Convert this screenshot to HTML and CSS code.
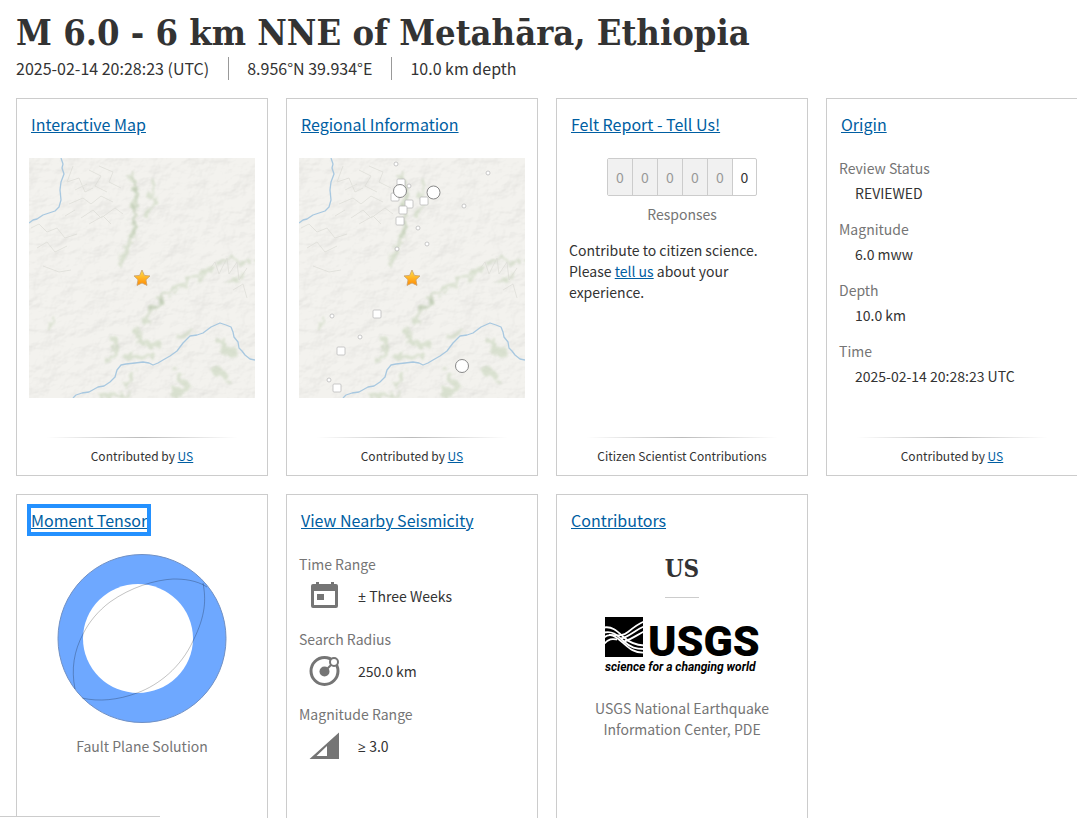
FILE: index.html
```html
<!DOCTYPE html>
<html lang="en-US">
<head>
	<meta charset="utf-8">
	<meta name="viewport" content="width=device-width, initial-scale=1">
	<title>M 6.0 - 6 km NNE of Metahāra, Ethiopia</title>
	<link rel="stylesheet" href="styles.css">
</head>
<body>

<!-- shared base map and star, used by both map cards -->
<svg class="defs" width="0" height="0" aria-hidden="true">
	<defs>
		<filter id="relief" x="0" y="0" width="100%" height="100%" color-interpolation-filters="sRGB">
			<feTurbulence type="fractalNoise" baseFrequency="0.04 0.055" numOctaves="5" seed="11"/>
			<feDiffuseLighting surfaceScale="3" diffuseConstant="1.2" lighting-color="#fffffb">
				<feDistantLight azimuth="225" elevation="52"/>
			</feDiffuseLighting>
		</filter>
		<filter id="soft" x="-10%" y="-10%" width="120%" height="120%">
			<feTurbulence type="fractalNoise" baseFrequency="0.12" numOctaves="3" seed="4" result="noise"/>
			<feDisplacementMap in="SourceGraphic" in2="noise" scale="16" xChannelSelector="R" yChannelSelector="G"/>
			<feGaussianBlur stdDeviation="1.2"/>
		</filter>
		<linearGradient id="gold" x1="0" y1="0" x2="0" y2="1">
			<stop offset="0" stop-color="#ffe14d"/>
			<stop offset="1" stop-color="#ff8a00"/>
		</linearGradient>
		<symbol id="basemap" viewBox="0 0 226 240">
			<rect width="226" height="240" fill="#f2f1ed"/>
			<rect width="226" height="240" filter="url(#relief)" opacity="0.1"/>
			<g fill="none" stroke="#c6d4b9" stroke-linecap="round" opacity="0.55" filter="url(#soft)">
				<path stroke-width="5" d="M103 18L107 40L105 60L104 80L96 92L91 108"/>
				<path stroke-width="4" d="M123 22L125 42L116 60"/>
				<path stroke-width="4" d="M186 108L165 120L150 129L137 137L122 150L116 165"/>
				<path stroke-width="5" d="M106 172L112 184L130 188M84 180L86 192L80 202M96 200L125 197"/>
				<path stroke-width="4" d="M103 216L98 228M20 170L26 160M150 178L164 174"/>
				<path stroke-width="8" d="M150 216L158 228L148 236M190 185L206 195M188 212L198 222"/>
				<path stroke-width="4" d="M190 105L204 102L222 104M200 124L216 120M72 239L100 236"/>
			</g>
			<path fill="none" stroke="#8fa381" stroke-width="2" opacity="0.3" filter="url(#soft)" d="M105 20L108 42L104 80M120 152L140 135"/>
			<g fill="none" stroke="#dcdcd6" stroke-width="1" opacity="0.7">
				<path d="M44 8L38 24L50 20L56 34L64 30M60 12L72 18L66 28L78 34M40 46L54 40L62 46L72 38L84 44M52 60L64 52L72 60L86 50L94 56"/>
				<path d="M46 32L58 26M70 8L84 14L80 24L92 30M60 66L74 58L82 66M36 58L46 52"/>
				<path d="M2 70L10 66L18 74L28 70L36 80L48 76M8 90L18 84L26 94L38 88M14 108L30 114L42 112"/>
				<path d="M180 112L186 104L190 116L198 100L200 116L208 104L210 122L218 110M204 132L214 126L218 140"/>
			</g>
			<g fill="none" stroke="#a8c8e0" stroke-width="1.3" stroke-linejoin="round">
				<path d="M32 0L34 6L33 10L35 16L32 24L31 32L32 42L30 49L26 53L20 55L14 57L8 61L4 62L0 65"/>
				<path d="M44 240L47 237L53 235L60 234L69 229L75 228L81 224L86 219L88 212L92 207L97 206L106 205L114 204L120 205L124 207L129 205L134 202L141 198L148 193L154 185L161 178L168 177L174 175L182 169L191 165L197 167L202 169L204 174L205 179L209 184L210 190L213 193L216 197L221 201L226 202"/>
			</g>
		</symbol>
		<symbol id="star" viewBox="0 0 18 18">
			<path fill="url(#gold)" stroke="#c9a06c" stroke-width="0.8" stroke-linejoin="round" d="M9 1L11.4 6.4L17 6.9L13 10.8L14 16.4L9 14L4 16.4L5 10.8L1 6.9L6.6 6.4Z"/>
		</symbol>
	</defs>
</svg>

<main class="event">
	<header class="event-header">
		<h1>M 6.0 - 6 km NNE of Metahāra, Ethiopia</h1>
		<ul class="details">
			<li>2025-02-14 20:28:23 (UTC)</li>
			<li>8.956°N 39.934°E</li>
			<li>10.0 km depth</li>
		</ul>
	</header>

	<div class="cards">
		<section class="card">
			<h2><a href="#map">Interactive Map</a></h2>
			<svg class="map" viewBox="0 0 226 240" preserveAspectRatio="xMidYMid slice" role="img" aria-label="Map of the epicenter">
				<use href="#basemap" width="226" height="240"/>
				<use href="#star" x="104" y="111" width="18" height="18"/>
			</svg>
			<footer>Contributed by <a href="#us">US</a></footer>
		</section>

		<section class="card">
			<h2><a href="#region-info">Regional Information</a></h2>
			<svg class="map" viewBox="0 0 226 240" preserveAspectRatio="xMidYMid slice" role="img" aria-label="Map of regional seismicity">
				<use href="#basemap" width="226" height="240"/>
				<g fill="#fff" stroke="#bbb" stroke-width="0.8">
					<circle cx="97" cy="6" r="2"/>
					<circle cx="110" cy="28" r="2"/>
					<circle cx="189" cy="15" r="2"/>
					<circle cx="165" cy="48" r="2"/>
					<circle cx="119" cy="70" r="2"/>
					<circle cx="128" cy="86" r="2"/>
					<circle cx="98" cy="91" r="2"/>
					<circle cx="33" cy="158" r="2"/>
					<circle cx="61" cy="179" r="2"/>
					<circle cx="30" cy="222" r="2"/>
					<rect x="98" y="21" width="8" height="8" rx="1"/>
					<rect x="92" y="35" width="8" height="8" rx="1"/>
					<rect x="106" y="42" width="8" height="8" rx="1"/>
					<rect x="121" y="39" width="8" height="8" rx="1"/>
					<rect x="100" y="48" width="8" height="8" rx="1"/>
					<rect x="97" y="59" width="8" height="8" rx="1"/>
					<rect x="74" y="152" width="8" height="8" rx="1"/>
					<rect x="38" y="189" width="8" height="8" rx="1"/>
					<rect x="34" y="226" width="8" height="8" rx="1"/>
				</g>
				<g fill="#fff" stroke="#888" stroke-width="1">
					<circle cx="101" cy="33" r="6.5"/>
					<circle cx="134.5" cy="34.5" r="6.5"/>
					<circle cx="163" cy="208" r="6.5"/>
				</g>
				<use href="#star" x="104" y="111" width="18" height="18"/>
			</svg>
			<footer>Contributed by <a href="#us">US</a></footer>
		</section>

		<section class="card">
			<h2><a href="#tellus">Felt Report - Tell Us!</a></h2>
			<div class="responses">
				<span class="digit empty">0</span>
				<span class="digit empty">0</span>
				<span class="digit empty">0</span>
				<span class="digit empty">0</span>
				<span class="digit empty">0</span>
				<span class="digit">0</span>
			</div>
			<p class="caption responses-label">Responses</p>
			<p class="contribute">Contribute to citizen science. Please <a href="#tellus">tell us</a> about your experience.</p>
			<footer>Citizen Scientist Contributions</footer>
		</section>

		<section class="card">
			<h2><a href="#origin">Origin</a></h2>
			<dl class="origin">
				<dt>Review Status</dt>
				<dd>REVIEWED</dd>
				<dt>Magnitude</dt>
				<dd>6.0 mww</dd>
				<dt>Depth</dt>
				<dd>10.0 km</dd>
				<dt>Time</dt>
				<dd>2025-02-14 20:28:23 UTC</dd>
			</dl>
			<footer>Contributed by <a href="#us">US</a></footer>
		</section>

		<section class="card">
			<h2><a class="focused" href="#moment-tensor">Moment Tensor</a></h2>
			<svg class="beachball" viewBox="0 0 170 170" width="170" height="170" role="img" aria-label="Focal mechanism">
				<circle cx="85" cy="84.5" r="84" fill="#6ea8ff" stroke="#7090c4"/>
				<ellipse cx="81" cy="84.5" rx="55" ry="54.5" fill="#fff"/>
				<g fill="none" stroke="#000" stroke-opacity="0.24">
					<path d="M146 29C149 45 149 61 136 87C124 113 102 131 80 139C61 146 42 148 25 144"/>
					<path d="M150 33C139 26 127 25 116 25C98 26 74 33 53 48C41 57 32 68 26 80C17 97 14 115 18 135"/>
				</g>
			</svg>
			<p class="caption">Fault Plane Solution</p>
		</section>

		<section class="card">
			<h2><a href="#nearby">View Nearby Seismicity</a></h2>
			<dl class="nearby">
				<dt>Time Range</dt>
				<dd>
					<svg class="icon" viewBox="0 0 32 32" width="32" height="32" aria-hidden="true">
						<path fill-rule="evenodd" d="M5 4H8V2H11V4H23V2H26V4H28Q30 4 30 6V26Q30 28 28 28H5Q3 28 3 26V6Q3 4 5 4ZM6 11V25H27V11ZM9 14H16V20H9Z"/>
					</svg>
					<span><span class="symbol">±</span> Three Weeks</span>
				</dd>
				<dt>Search Radius</dt>
				<dd>
					<svg class="icon" viewBox="0 0 32 32" width="32" height="32" aria-hidden="true">
						<circle cx="16.5" cy="16" r="13.5" fill="none" stroke="#757575" stroke-width="3"/>
						<circle cx="16.5" cy="16.5" r="5"/>
						<path stroke="#757575" stroke-width="2" d="M17 16L24 9"/>
						<circle cx="26" cy="7" r="4" fill="#fff" stroke="#757575" stroke-width="2"/>
					</svg>
					<span>250.0 km</span>
				</dd>
				<dt>Magnitude Range</dt>
				<dd>
					<svg class="icon" viewBox="0 0 32 32" width="32" height="32" aria-hidden="true">
						<path fill-rule="evenodd" d="M1.5 29L31 2.5V29ZM8.5 26H19V16Z"/>
					</svg>
					<span><span class="symbol">≥</span> 3.0</span>
				</dd>
			</dl>
		</section>

		<section class="card">
			<h2><a href="#contributors">Contributors</a></h2>
			<div class="contributor">
				<h3>US</h3>
				<svg class="logo" viewBox="0 0 156 58" width="156" height="58" role="img" aria-label="USGS science for a changing world">
					<rect x="1" y="0" width="38" height="40"/>
					<g fill="none" stroke="#fff" stroke-width="1.8">
						<path d="M0 10.5C9 9 14 15 20 20.5S32 28 40 28.5"/>
						<path d="M0 15.5C9 13.5 13 18 20 24.5S32 32 40 32"/>
						<path d="M0 20.5C7 15 12 20 18 25S29 36 40 35.5"/>
						<path d="M5 18C12 18 18 20 24 15S34 7 40 4.5"/>
						<path d="M17 21.5C25 20 31 13 40 9.5"/>
						<path d="M0 27C5 21 9 22 13 22.5M20 24.5C28 22 33 18 40 14.5"/>
					</g>
					<text class="logo-name" x="44" y="39">USGS</text>
					<text class="logo-tag" x="1" y="54">science for a changing world</text>
				</svg>
				<p class="caption">USGS National Earthquake Information Center, PDE</p>
			</div>
		</section>
	</div>
</main>

<div class="status-bar"></div>

</body>
</html>
```

FILE: styles.css
```css
html, body {
	height: 100%;
}
body {
	margin: 0;
	background: #fff;
	color: #333;
	font-family: "Noto Sans CJK SC", "Noto Sans", sans-serif;
	font-size: 14px;
	line-height: 22px;
}
h1, h2, h3, p, ul, dl, dd {
	margin: 0;
	padding: 0;
}
a {
	color: #005ea2;
}
.defs {
	position: absolute;
}

/* scrolling page */
.event {
	box-sizing: border-box;
	height: 100%;
	padding: 8px 0 18px 16px;
	overflow-x: hidden;
	overflow-y: auto;
	scrollbar-width: none;
}
.event-header h1 {
	font-family: "DejaVu Serif Condensed", "DejaVu Serif", serif;
	font-size: 36px;
	font-weight: bold;
	line-height: 49px;
	white-space: nowrap;
}
.details {
	display: flex;
	margin-bottom: 18px;
	list-style: none;
	font-size: 16px;
	line-height: 23px;
}
.details li + li {
	margin-left: 19px;
	padding-left: 18px;
	border-left: 1px solid #999;
}

/* cards */
.cards {
	display: grid;
	grid-template-columns: repeat(auto-fill, minmax(240px, 1fr));
	gap: 18px;
	margin-right: -1px;
}
.card {
	display: flex;
	flex-direction: column;
	box-sizing: border-box;
	min-height: 378px;
	padding: 12px 12px 8px;
	border: 1px solid #ccc;
}
.card h2 {
	margin-bottom: 21px;
	padding-left: 2px;
	font-size: 16px;
	font-weight: normal;
	line-height: 26px;
}
.card footer {
	margin-top: auto;
	padding-top: 7px;
	border-top: 1px solid;
	border-image: linear-gradient(to right, transparent 8%, #bbb 50%, transparent 92%) 1;
	font-size: 12px;
	text-align: center;
}
.focused {
	outline: 4px solid #2491ff;
}
.caption {
	color: #757575;
	text-align: center;
}
.map {
	display: block;
	width: 100%;
	height: 240px;
}

/* felt report */
.responses {
	display: flex;
	align-self: center;
	border: 1px solid #ccc;
	border-radius: 2px;
}
.digit {
	box-sizing: border-box;
	width: 25px;
	line-height: 36px;
	text-align: center;
}
.digit:last-child {
	width: 23px;
}
.empty {
	border-right: 1px solid #ccc;
	background: #f1f1f1;
	color: #999;
}
.responses-label {
	margin: 7px 0 15px;
}
.contribute {
	line-height: 21px;
}

/* origin and nearby lists */
dt {
	color: #757575;
	line-height: 20px;
}
.origin dd {
	margin: 0 0 11px 16px;
	line-height: 30px;
}
.nearby dd {
	display: flex;
	align-items: center;
	gap: 18px;
	height: 44px;
	margin: 0 0 11px 9px;
}
.icon {
	fill: #757575;
}
.symbol {
	font-family: "Noto Sans", "Open Sans", sans-serif;
}

.beachball {
	align-self: center;
	margin-bottom: 11px;
}

/* contributors */
.contributor {
	display: flex;
	flex-direction: column;
	align-items: center;
}
.contributor h3 {
	padding-bottom: 13px;
	border-bottom: 1px solid #ccc;
	font-family: "DejaVu Serif Condensed", "DejaVu Serif", serif;
	font-size: 24px;
	line-height: 30px;
}
.logo {
	margin: 19px 0 23px;
}
.logo-name {
	font: 900 43px Roboto, "Liberation Sans", sans-serif;
}
.logo-tag {
	font: italic bold 12px Roboto, "Liberation Sans", sans-serif;
}
.contributor .caption {
	line-height: 21px;
}

.status-bar {
	position: fixed;
	bottom: 0;
	left: 0;
	width: 160px;
	height: 1px;
	border-top: 1px solid #ccc;
	background: #fff;
}
```
